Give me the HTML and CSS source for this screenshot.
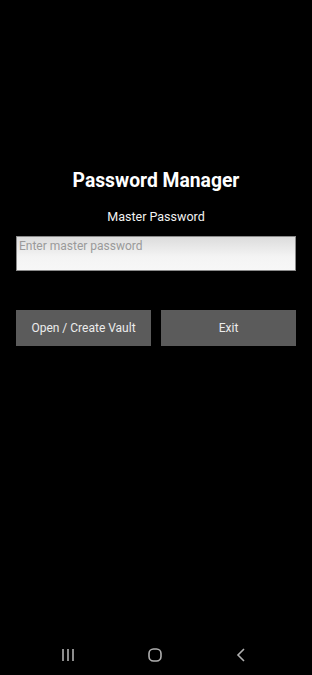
FILE: index.html
```html
<!doctype html>
<html lang="en">
  <head>
    <meta charset="UTF-8" />
    <meta name="viewport" content="width=device-width, initial-scale=1.0" />
    <title>Password Manager</title>
    <link rel="stylesheet" href="styles.css">
  </head>
  <body>
    <div class="screen">
      <div class="login">
        <h1 class="title">Password Manager</h1>
        <p class="label">Master Password</p>
        <input class="password" type="password" placeholder="Enter master password" />
        <div class="actions">
          <button class="btn">Open / Create Vault</button>
          <button class="btn">Exit</button>
        </div>
      </div>

      <div class="navbar">
        <svg class="nav-icon" width="16" height="16" viewBox="0 0 16 16">
          <path d="M3 2v12M8 2v12M13 2v12" stroke="#b0b0b0" stroke-width="1.6" fill="none" />
        </svg>
        <svg class="nav-icon" width="16" height="16" viewBox="0 0 16 16">
          <rect x="2" y="2" width="12" height="12" rx="4.5" stroke="#b0b0b0" stroke-width="1.6" fill="none" />
        </svg>
        <svg class="nav-icon" width="16" height="16" viewBox="0 0 16 16">
          <path d="M11 2L5 8l6 6" stroke="#b0b0b0" stroke-width="1.6" fill="none" />
        </svg>
      </div>
    </div>
  </body>
</html>
```

FILE: styles.css
```css
:root {
  --foreground: white;
  --background: #000000;
  --button: #5b5b5b;
  --navicon: #b0b0b0;
}
body {
  margin: 0;
  padding: 0;
  background-color: var(--background);
  font-family: Roboto, "Noto Sans", sans-serif;
  color: var(--foreground);
}

.screen {
  display: flex;
  flex-direction: column;
  height: 675px;
}

.login {
  display: flex;
  flex-direction: column;
  align-items: center;
  padding: 169px 16px 0;
}

.title {
  margin: 0;
  font-size: 19.3px;
  font-weight: bold;
  line-height: 24px;
}
.label {
  margin: 16px 0 0;
  font-size: 12.5px;
  line-height: 16px;
  color: #f2f2f2;
}
.password {
  box-sizing: border-box;
  width: 100%;
  height: 35px;
  margin-top: 11px;
  padding: 0 2px 16px;
  border: 1px solid #8a8a8a;
  background: linear-gradient(#dcdcdc, #f4f4f4 60%, #f7f7f7);
  font-family: inherit;
  font-size: 12px;
  outline: none;
}
.password::placeholder {
  color: #9a9a9a;
}

.actions {
  display: flex;
  gap: 10px;
  width: 100%;
  margin-top: 39px;
}
.btn {
  flex: 1;
  height: 36px;
  border: none;
  background-color: var(--button);
  color: #ececec;
  font-family: inherit;
  font-size: 12px;
  padding: 0;
  cursor: pointer;
}

.navbar {
  margin-top: auto;
  height: 40px;
  display: flex;
  justify-content: space-between;
  align-items: center;
  padding: 0 63px 0 60px;
}
.nav-icon {
  display: block;
}
```
